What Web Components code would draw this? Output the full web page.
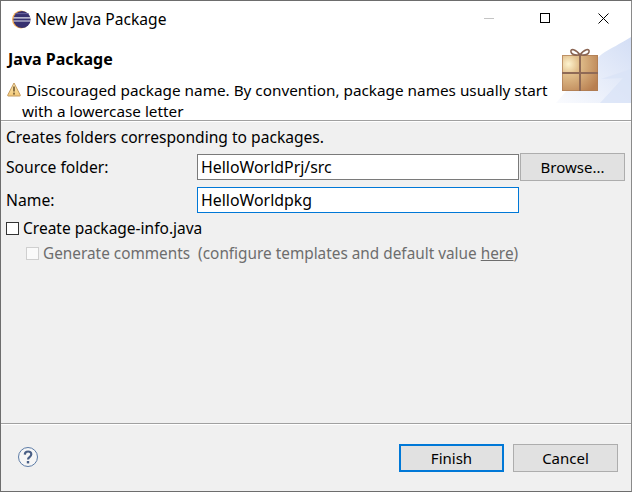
<!DOCTYPE html>
<html>
<head>
<meta charset="utf-8">
<title>New Java Package</title>
<style>
html, body { margin: 0; padding: 0; width: 632px; height: 492px; overflow: hidden; }
body { font: 15px "Noto Sans", "Open Sans", sans-serif; color: #000; }
</style>
</head>
<body>
<wizard-dialog>
    <title-bar slot="title">New Java Package</title-bar>
    <wizard-header slot="header" heading="Java Package">Discouraged package name. By convention, package names usually start<br>with a lowercase letter</wizard-header>

    <p-desc>Creates folders corresponding to packages.</p-desc>
    <form-row label="Source folder:" value="HelloWorldPrj/src" browse></form-row>
    <form-row label="Name:" value="HelloWorldpkg" focused></form-row>
    <check-row>Create package-info.java</check-row>
    <check-row disabled>Generate comments&nbsp; (configure templates and default value <u>here</u>)</check-row>

    <button-bar slot="footer"></button-bar>
</wizard-dialog>

<script>
function define(name, css, html, init) {
    customElements.define(name, class extends HTMLElement {
        constructor() {
            super();
            this.attachShadow({mode: 'open'});
            this.shadowRoot.innerHTML = `<style>${css}</style>${html}`;
        }
        connectedCallback() {
            if (init) init(this, this.shadowRoot);
        }
    });
}

define('wizard-dialog', `
    :host { display: flex; flex-direction: column; box-sizing: border-box; width: 632px; height: 492px;
        border: 1px solid #6d6d6d; border-right-color: #8a8a8a; background: #f0f0f0; }
    .content { flex: 1; display: flex; flex-direction: column; padding: 6px 6px 0 5px; }
`, `
    <slot name="title"></slot>
    <slot name="header"></slot>
    <div class="content"><slot></slot></div>
    <slot name="footer"></slot>
`);

define('title-bar', `
    :host { display: flex; align-items: center; height: 36px; background: #fff; padding-left: 11px; font-size: 15.6px; }
    svg { display: block; flex: none; }
    .text { margin-left: 4px; flex: 1; white-space: nowrap; }
    .btn { height: 34px; margin-bottom: 2px; display: flex; align-items: center; justify-content: center; flex: none; }
    .btns { display: flex; }
`, `
    <svg width="19" height="19" viewBox="0 0 19 19">
        <circle cx="9" cy="9.5" r="9" fill="#f0a94f"/>
        <circle cx="10" cy="9.5" r="8.6" fill="#37306f"/>
        <path d="M1.6 7.2h16.8v1.2H1.6zM1.6 10.4h16.8v1.2H1.6z" fill="#e4e3ee"/>
        <path d="M3.5 3.6h13" stroke="#6a64a0" stroke-width="1" fill="none"/>
    </svg>
    <span class="text"><slot></slot></span>
    <div class="btns">
        <div class="btn" style="width:54px"><svg width="10" height="1"><rect width="10" height="1" fill="#c4c4c4"/></svg></div>
        <div class="btn" style="width:58px;margin-right:2px"><svg width="10" height="10"><rect x=".5" y=".5" width="9" height="9" fill="none" stroke="#000"/></svg></div>
        <div class="btn" style="width:55px"><svg width="11" height="11"><path d="M.5.5l10 10M10.5.5l-10 10" stroke="#000" fill="none"/></svg></div>
    </div>
`);

define('wizard-header', `
    :host { display: block; position: relative; height: 83px; background: #fff;
        border-bottom: 1px solid #a0a0a0; box-shadow: 0 1px 0 #fff; }
    h1 { margin: 0; padding: 12px 0 0 7px; font-size: 16px; line-height: 20px; font-weight: 700; }
    .msg { display: flex; padding: 11px 0 0 6px; line-height: 20.6px; font-size: 15.3px; }
    .msg svg { flex: none; margin: 2px 1px 0 0; }
    .msg div { text-indent: 4px; white-space: nowrap; }
    .art { position: absolute; right: 0; top: 0; bottom: 0; }
`, `
    <svg class="art" width="78" height="83" viewBox="0 0 78 83">
        <defs>
            <linearGradient id="w" x1="0" y1="1" x2="1" y2="0"><stop offset="0" stop-color="#fafbfe"/><stop offset="1" stop-color="#d3def5"/></linearGradient>
            <radialGradient id="g" cx=".18" cy=".25" r=".95"><stop offset="0" stop-color="#fdf3cf"/><stop offset=".3" stop-color="#e2c08d"/><stop offset="1" stop-color="#b87f50"/></radialGradient>
        </defs>
        <path d="M3 66C15 52 33 30 49 17 58 11 67 7 78 0V66Z" fill="url(#w)"/>
        <path d="M47 66 70 41 48 42 78 32V66Z" fill="#d9e2f6" opacity=".7"/>
        <rect x="9" y="18" width="36" height="36" fill="url(#g)"/>
        <rect x="9.5" y="18.5" width="35" height="35" fill="none" stroke="#ad7a52" stroke-opacity=".7"/>
        <path d="M27 18V54M9 36H45" stroke="#8f6a56" stroke-width="2" fill="none"/>
        <path d="M27 18C23 12 17 11 18 15S23 18 27 18C31 12 37 11 36 15S31 18 27 18Z" fill="none" stroke="#8a6553" stroke-width="1.6"/>
    </svg>
    <h1></h1>
    <div class="msg">
        <svg width="14" height="15" viewBox="0 0 14 15">
            <defs><linearGradient id="y" x1="0" y1="0" x2="0" y2="1"><stop offset="0" stop-color="#fdeebb"/><stop offset="1" stop-color="#f3c877"/></linearGradient></defs>
            <path d="M7 1 13.3 13.2Q13.5 14 12.8 14H1.2Q.5 14 .7 13.2Z" fill="url(#y)" stroke="#c49a5e" stroke-linejoin="round"/>
            <path d="M7 4.5v5" stroke="#8a6f42" stroke-width="2"/><rect x="6" y="10.6" width="2" height="2" fill="#8a6f42"/>
        </svg>
        <div><slot></slot></div>
    </div>
`, (el, root) => { root.querySelector('h1').textContent = el.getAttribute('heading'); });

define('p-desc', `:host { display: block; line-height: 20px; height: 26px; font-size: 15.6px; }`, `<slot></slot>`);

define('text-field', `
    :host { display: block; box-sizing: border-box; height: 26px; background: #fff; border: 1px solid #7a7a7a;
        padding-left: 3px; line-height: 24px; white-space: nowrap; font-size: 15.9px; }
    :host([focused]) { border-color: #0078d7; }
`, `<slot></slot>`);

define('push-button', `
    :host { display: flex; align-items: center; justify-content: center; box-sizing: border-box;
        width: 105px; height: 28px; background: #e1e1e1; border: 1px solid #adadad; font-size: 15px; }
    :host([primary]) { border: 2px solid #0078d7; }
`, `<slot></slot>`);

define('form-row', `
    :host { display: flex; align-items: center; height: 28px; margin-bottom: 5px; }
    label { width: 191px; flex: none; font-size: 15.7px; }
    .field { width: 322px; flex: none; }
    .side { width: 105px; margin-left: 1px; flex: none; }
`, `
    <label></label>
    <div class="field"><text-field></text-field></div>
    <div class="side"></div>
`, (el, root) => {
    root.querySelector('label').textContent = el.getAttribute('label');
    const field = root.querySelector('text-field');
    field.textContent = el.getAttribute('value');
    if (el.hasAttribute('focused')) field.setAttribute('focused', '');
    if (el.hasAttribute('browse')) {
        const b = document.createElement('push-button');
        b.textContent = 'Browse...';
        root.querySelector('.side').appendChild(b);
    }
});

define('check-row', `
    :host { display: flex; align-items: center; height: 20px; margin: -1px 0 5px; font-size: 15.5px; white-space: nowrap; }
    :host([disabled]) { color: #6d6d6d; padding-left: 20px; font-size: 15.35px; margin-top: 0; }
    .box { box-sizing: border-box; width: 13px; height: 13px; background: #fff; border: 1px solid #333; margin: 0 4px 0 0; flex: none; }
    :host([disabled]) .box { border-color: #cfcfcf; background: #fafafa; }
`, `<span class="box"></span><span><slot></slot></span>`);

define('button-bar', `
    :host { display: flex; align-items: flex-start; box-sizing: border-box; height: 68px; border-top: 1px solid #a0a0a0;
        box-shadow: inset 0 1px 0 #fff; padding: 20px 13px 0 17px; }
    svg { margin-top: 3px; display: block; }
    .spacer { flex: 1; }
    push-button + push-button { margin-left: 9px; }
`, `
    <svg width="20" height="20" viewBox="0 0 20 20">
        <circle cx="10" cy="10" r="9.5" fill="#fff" fill-opacity=".4" stroke="#5c7ba6"/>
        <path d="M6.8 7.6C7 3.4 13.3 3.6 13.3 7.3 13.3 10 10 10 10 12.4" fill="none" stroke="#4a5f85" stroke-width="2.2"/>
        <rect x="8.8" y="14" width="2.4" height="2.4" fill="#4a5f85"/>
    </svg>
    <div class="spacer"></div>
    <push-button primary>Finish</push-button>
    <push-button>Cancel</push-button>
`);
</script>
</body>
</html>
